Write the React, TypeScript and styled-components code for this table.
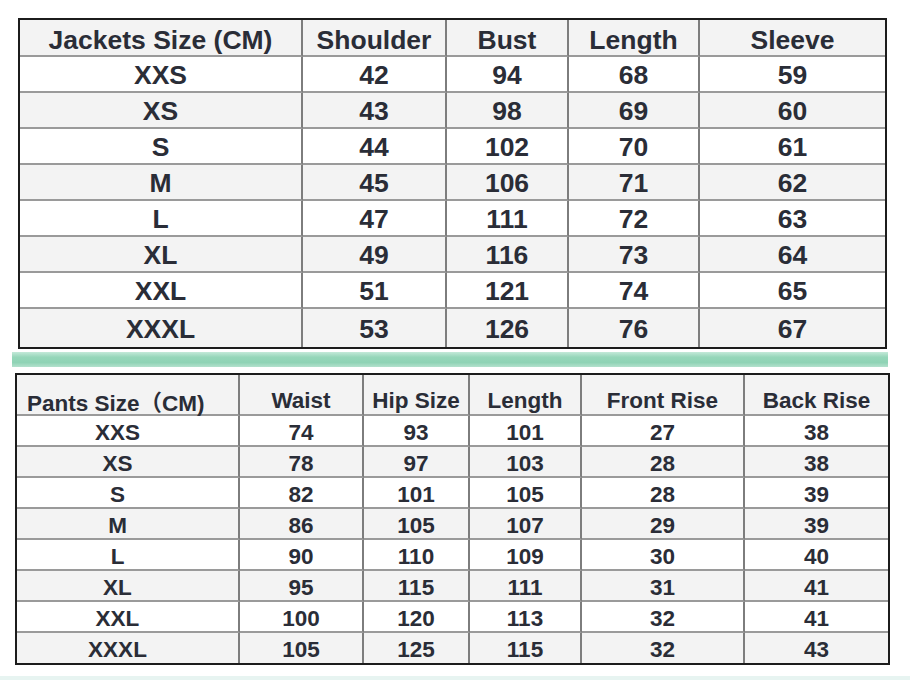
import styled, { createGlobalStyle } from 'styled-components';

const GlobalStyle = createGlobalStyle`
  body {
    margin: 0;
    background: #ffffff;
    font-family: "Liberation Sans", Arial, "Noto Sans CJK SC", sans-serif;
  }
`;

const Page = styled.div`
  box-sizing: border-box;
  display: flex;
  flex-direction: column;
  padding-top: 18px;
  width: 910px;
  height: 680px;
  position: relative;
`;

type ChartProps = {
  $cols: number[];
  $left: number;
};

const Chart = styled.div<ChartProps>`
  display: grid;
  grid-template-columns: ${({ $cols }) => $cols.map((c) => `${c}px`).join(' ')};
  border: 2px solid #1c1c1c;
  margin-left: ${({ $left }) => $left}px;
  width: fit-content;
  color: #2a2d37;
  font-weight: 700;
`;

type CellProps = {
  $head?: boolean;
  $alt?: boolean;
  $lastCol?: boolean;
  $lastRow?: boolean;
  $height: number;
  $size: number;
  $align?: 'left' | 'center';
  $shift?: number;
  $dy: number;
};

const Cell = styled.div<CellProps>`
  box-sizing: border-box;
  height: ${({ $height }) => $height}px;
  display: flex;
  align-items: center;
  justify-content: ${({ $align }) => ($align === 'left' ? 'flex-start' : 'center')};
  padding-top: ${({ $dy }) => $dy * 2}px;
  padding-left: ${({ $align }) => ($align === 'left' ? 10 : 0)}px;
  padding-right: ${({ $shift }) => $shift || 0}px;
  font-size: ${({ $size }) => $size}px;
  white-space: nowrap;
  background: ${({ $head, $alt }) => ($head || $alt ? '#f3f3f3' : '#ffffff')};
  border-right: ${({ $lastCol }) => ($lastCol ? 'none' : '2px solid #7d7d7d')};
  border-bottom: ${({ $lastRow }) => ($lastRow ? 'none' : '2px solid #9a9a9a')};
`;

const GreenBand = styled.div`
  margin: 3px 0 6px 12px;
  width: 876px;
  height: 15px;
  background: linear-gradient(#c4e9d9 0%, #95d6b9 35%, #8fd3b5 70%, #b3e1cd 100%);
`;

const BottomStripe = styled.div`
  position: absolute;
  left: 0;
  right: 0;
  bottom: 0;
  height: 4px;
  background: #e7f4f1;
`;

type ChartData = {
  head: string[];
  rows: string[][];
};

const jackets: ChartData = {
  head: ['Jackets Size (CM)', 'Shoulder', 'Bust', 'Length', 'Sleeve'],
  rows: [
    ['XXS', '42', '94', '68', '59'],
    ['XS', '43', '98', '69', '60'],
    ['S', '44', '102', '70', '61'],
    ['M', '45', '106', '71', '62'],
    ['L', '47', '111', '72', '63'],
    ['XL', '49', '116', '73', '64'],
    ['XXL', '51', '121', '74', '65'],
    ['XXXL', '53', '126', '76', '67'],
  ],
};

const pants: ChartData = {
  head: ['Pants Size（CM)', 'Waist', 'Hip Size', 'Length', 'Front Rise', 'Back Rise'],
  rows: [
    ['XXS', '74', '93', '101', '27', '38'],
    ['XS', '78', '97', '103', '28', '38'],
    ['S', '82', '101', '105', '28', '39'],
    ['M', '86', '105', '107', '29', '39'],
    ['L', '90', '110', '109', '30', '40'],
    ['XL', '95', '115', '111', '31', '41'],
    ['XXL', '100', '120', '113', '32', '41'],
    ['XXXL', '105', '125', '115', '32', '43'],
  ],
};

type SizeChartProps = {
  data: ChartData;
  cols: number[];
  left: number;
  headHeight: number;
  rowHeight: number;
  lastHeight: number;
  size: number;
  headSize: number;
  headDy: number;
  rowDy: number;
  firstShift?: number;
  headLeft?: boolean;
};

const SizeChart = ({
  data,
  cols,
  left,
  headHeight,
  rowHeight,
  lastHeight,
  size,
  headSize,
  headDy,
  rowDy,
  firstShift,
  headLeft,
}: SizeChartProps) => {
  const last = cols.length - 1;
  return (
    <Chart $cols={cols} $left={left}>
      {data.head.map((h, i) => (
        <Cell
          key={h}
          $head
          $height={headHeight}
          $size={headSize}
          $dy={headDy}
          $lastCol={i === last}
          $align={headLeft && i === 0 ? 'left' : 'center'}
        >
          {h}
        </Cell>
      ))}
      {data.rows.map((row, r) =>
        row.map((v, i) => (
          <Cell
            key={`${r}-${i}`}
            $alt={r % 2 === 1}
            $height={r === data.rows.length - 1 ? lastHeight : rowHeight}
            $size={size}
            $dy={rowDy}
            $lastCol={i === last}
            $lastRow={r === data.rows.length - 1}
            $shift={i === 0 ? firstShift : 0}
          >
            {v}
          </Cell>
        ))
      )}
    </Chart>
  );
};

const App = () => {
  return (
    <Page>
      <GlobalStyle />
      <SizeChart
        data={jackets}
        cols={[283, 144, 122, 131, 185]}
        left={18}
        headHeight={37}
        rowHeight={36}
        lastHeight={38}
        size={26.5}
        headSize={26.5}
        headDy={2.5}
        rowDy={1}
      />
      <GreenBand />
      <SizeChart
        data={pants}
        cols={[223, 124, 106, 112, 163, 143]}
        left={15}
        headHeight={41}
        rowHeight={31}
        lastHeight={30}
        size={22.5}
        headSize={22.5}
        headDy={6}
        rowDy={2}
        firstShift={20}
        headLeft
      />
      <BottomStripe />
    </Page>
  );
};

export default App;
